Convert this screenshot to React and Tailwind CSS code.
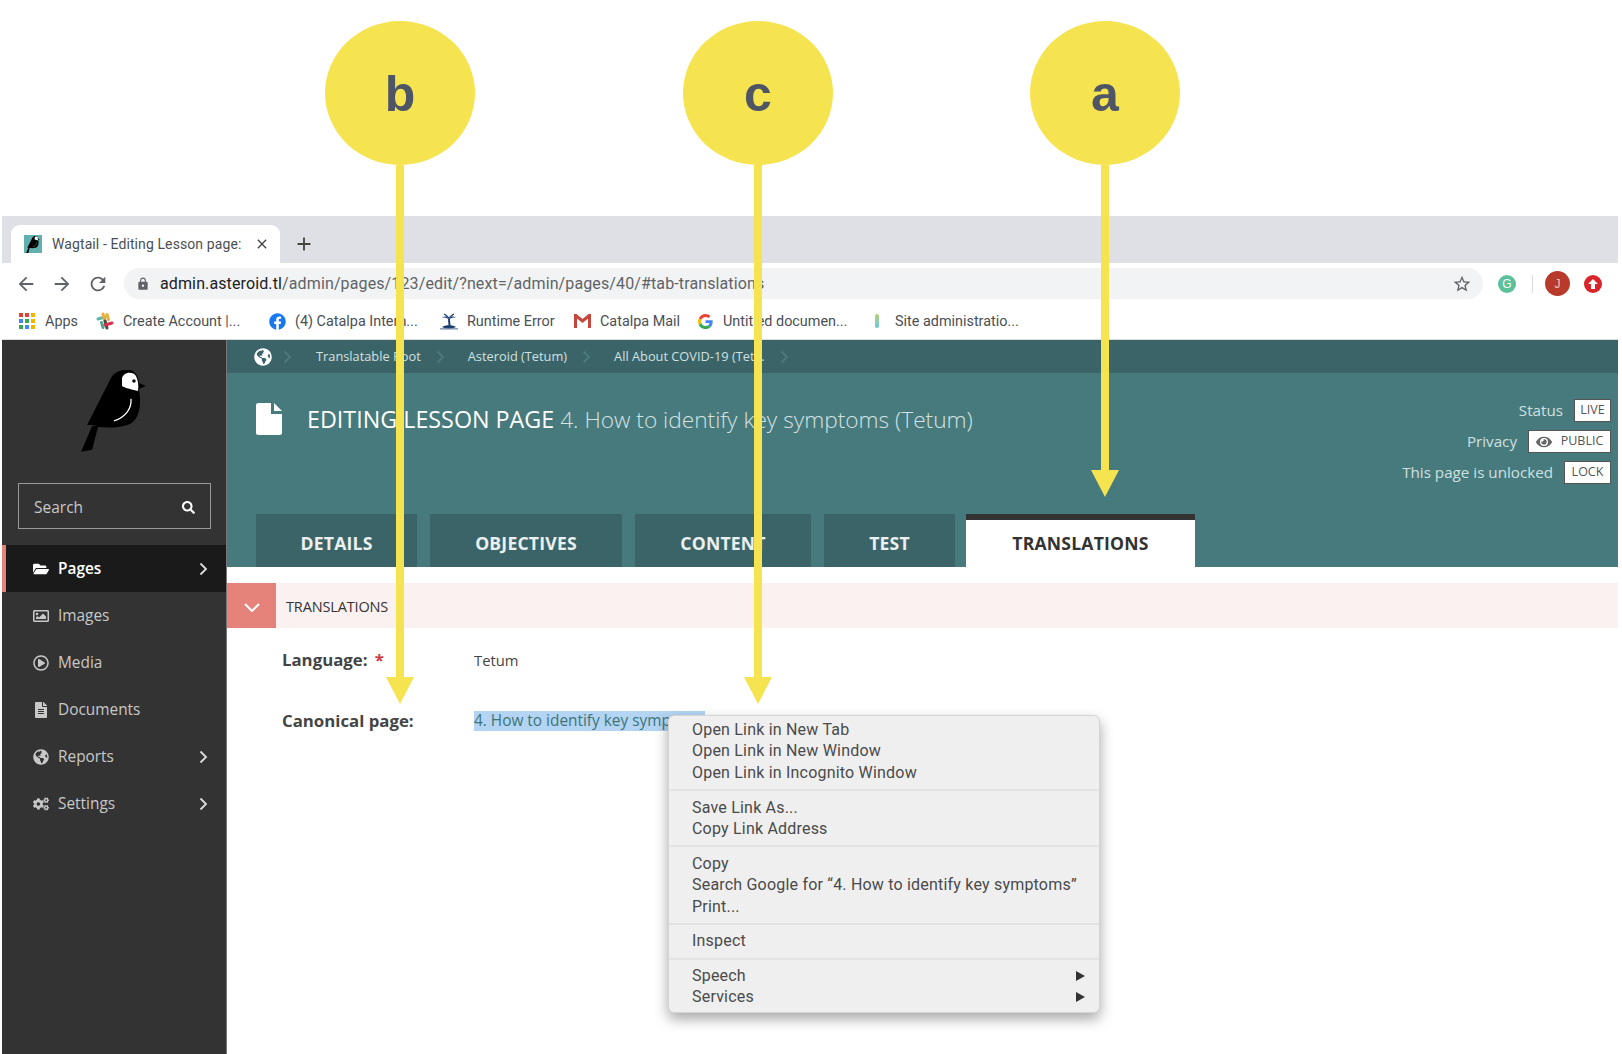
import { FaFolderOpen, FaRegImage, FaRegPlayCircle, FaFileAlt, FaGlobeAmericas, FaCogs, FaSearch, FaEye, FaFacebook } from 'react-icons/fa'
import { MdArrowBack, MdArrowForward, MdRefresh, MdStarBorder, MdLock, MdClose, MdAdd } from 'react-icons/md'

const SANS = "font-['Open_Sans',sans-serif]"
const UI = "font-['Roboto',sans-serif]"

function Marker({ letter, left, bottom }) {
  return (
    <div className="absolute top-[21px] flex flex-col items-center w-[150px]" style={{ left }}>
      <div className="w-[150px] h-[144px] rounded-[50%] bg-[#f5e350] flex items-center justify-center text-[50px] font-bold text-[#4e5666] font-['Liberation_Sans',sans-serif] pt-[2px]">
        {letter}
      </div>
      <div className="w-[8px] bg-[#f5e350]" style={{ height: bottom - 165 - 26 }} />
      <div className="w-0 h-0 border-l-[14px] border-r-[14px] border-t-[27px] border-l-transparent border-r-transparent border-t-[#f5e350]" />
    </div>
  )
}

function Bookmark({ icon, label, className }) {
  return (
    <div className={`flex items-center gap-[9px] ${className}`}>
      <span className="w-[18px] flex justify-center">{icon}</span>
      <span>{label}</span>
    </div>
  )
}

function AppsIcon() {
  const colors = ['#e34133', '#e34133', '#f4b400', '#4285f4', '#34a853', '#f4b400', '#34a853', '#4285f4', '#f4b400']
  return (
    <span className="grid grid-cols-3 gap-[2px] w-[16px]">
      {colors.map((c, i) => (
        <span key={i} className="w-[4px] h-[4px]" style={{ background: c }} />
      ))}
    </span>
  )
}

function GmailIcon() {
  return (
    <svg width="17" height="14" viewBox="0 0 17 14">
      <path d="M0 0h2.5L8.5 5 14.500 0H17v14h-3V4.500L8.500 9 3 4.500V14H0z" fill="#c5463a" />
    </svg>
  )
}

function GoogleIcon() {
  return (
    <svg width="15" height="15" viewBox="0 0 48 48">
      <path fill="#ea4335" d="M24 9.500c3.500 0 6.700 1.200 9.200 3.600l6.800-6.800C35.900 2.400 30.400 0 24 0 14.600 0 6.500 5.400 2.600 13.200l8 6.200C12.400 13.700 17.700 9.500 24 9.500z" />
      <path fill="#4285f4" d="M47 24.500c0-1.600-.1-3.100-.4-4.500H24v9h12.900c-.6 3-2.200 5.500-4.700 7.200l7.700 6C44.400 37.900 47 31.800 47 24.500z" />
      <path fill="#fbbc05" d="M10.500 28.600c-.5-1.400-.8-3-.8-4.600s.3-3.200.8-4.600l-8-6.200C.9 16.500 0 20.100 0 24s.9 7.500 2.600 10.800z" />
      <path fill="#34a853" d="M24 48c6.500 0 11.900-2.100 15.900-5.800l-7.700-6c-2.200 1.400-4.900 2.300-8.200 2.300-6.300 0-11.600-4.200-13.500-9.900l-8 6.200C6.500 42.600 14.600 48 24 48z" />
    </svg>
  )
}

function SlackIcon() {
  return (
    <svg width="18" height="18" viewBox="0 0 18 18" fill="none" strokeWidth="3" strokeLinecap="round">
      <path d="M2 7 L9 5" stroke="#5eb5a8" />
      <path d="M7 2 L9 9" stroke="#e8b13a" />
      <path d="M9 9 L11 16" stroke="#4a4a4a" />
      <path d="M9 13 L16 11" stroke="#d6314f" />
      <path d="M11 2.500 L12.500 7.500" stroke="#e8b13a" />
      <path d="M5.500 10.500 L7 15.500" stroke="#4fa98f" />
    </svg>
  )
}

function PalmIcon() {
  return (
    <svg width="18" height="17" viewBox="0 0 18 17" fill="#1d3f72">
      <path d="M8 6 L10 6 L10.500 13 L8.500 13 Z" />
      <path d="M9 6 C7 3 4 3 2 5 C4 4 6 5 9 6 Z M9 6 C11 3 14 3 16 5 C14 4 12 5 9 6 Z" />
      <path d="M9 5.500 C7.500 2.500 6 1.500 4 1 L9 5.500 Z M9 5.500 C10.500 2.500 12 1.500 14 1 L9 5.500 Z" stroke="#1d3f72" strokeWidth="0.800" />
      <path d="M2 14 C5 11.500 13 11.500 16 14 C14 15.800 4 15.800 2 14 Z" />
      <path d="M0 15.500 H18 V16.300 H0 Z" />
    </svg>
  )
}

function PageIcon() {
  return (
    <svg width="26" height="32" viewBox="0 0 26 32" className="shrink-0">
      <path d="M2 0 H15 V11 H26 V30 C26 31 25 32 24 32 H2 C1 32 0 31 0 30 V2 C0 1 1 0 2 0 Z" fill="#fff" />
      <path d="M18 0 L26 8 H18 Z" fill="#fff" />
    </svg>
  )
}

function Chevron({ className }) {
  return (
    <svg width="9" height="14" viewBox="0 0 9 14" fill="none" stroke="currentColor" strokeWidth="1.800" className={className}>
      <path d="M1.500 1.500 L7 7 L1.500 12.500" />
    </svg>
  )
}

function WagtailBird({ size = 66, className = '' }) {
  return (
    <svg width={size} height={size * 1.24} viewBox="0 0 66 82" className={className}>
      <path d="M0 82 L11 56 L16 55 C8 55 8 55 6 55 L30 8 C34 1 42 -1 50 0 C55 2 58 8 58 13 L65 16 L58 19 C60 30 60 45 52 52 C44 58 30 58 17 57 L11 80 Z" fill="#000" />
      <path d="M41 8 C43 2 52 1 55 6 C57 10 58 15 57 21 C52 20 44 18 41 16 Z" fill="#fff" />
      <circle cx="53" cy="11" r="1.800" fill="#111" />
      <path d="M50 29 C51 38 45 47 33 51" stroke="#fff" strokeWidth="1.300" fill="none" />
    </svg>
  )
}

function NavItem({ icon, label, chevron, active }) {
  return (
    <div className={`flex items-center h-[47px] pl-[26px] pr-[18px] border-l-[4px] ${active ? 'bg-[#1a1a1a] border-[#e5837a] text-white font-semibold' : 'border-transparent text-[#c8c8c8]'}`}>
      <span className="w-[18px] flex justify-center text-[16px]">{icon}</span>
      <span className="ml-[8px] text-[15.400px] flex-1">{label}</span>
      {chevron && <Chevron className="text-[#ddd]" />}
    </div>
  )
}

function Tab({ label, width, active }) {
  return (
    <div className={`h-[53px] flex items-center justify-center text-[17.600px] font-bold tracking-[0.2px] ${active ? 'bg-white text-[#333] border-t-[6px] border-[#333] -ml-[2px]' : 'bg-[#3a6468] text-white/90 pt-[6px]'}`} style={{ width }}>
      {label}
    </div>
  )
}

function Crumb({ label }) {
  return (
    <>
      <span className="text-[12.800px] text-[#d2e0e0]">{label}</span>
      <Chevron className="text-[#4d7a7d] mx-[15px]" />
    </>
  )
}

function StatusRow({ label, badge, width, icon }) {
  return (
    <div className="flex items-center justify-end gap-[11px] h-[31px]">
      <span className="text-[15.200px] text-[#cfe0e0]">{label}</span>
      <span className="h-[23px] bg-white border border-[#555] flex items-center justify-center gap-[9px] text-[12.500px] text-[#555]" style={{ width }}>
        {icon}
        {badge}
      </span>
    </div>
  )
}

const MENU = [
  ['Open Link in New Tab', 'Open Link in New Window', 'Open Link in Incognito Window'],
  ['Save Link As...', 'Copy Link Address'],
  ['Copy', 'Search Google for “4. How to identify key symptoms”', 'Print...'],
  ['Inspect'],
  ['Speech', 'Services'],
]

function ContextMenu() {
  return (
    <div className={`absolute left-[668px] top-[715px] w-[432px] h-[298px] bg-[#efefef] rounded-[6px] shadow-[0_6px_14px_rgba(0,0,0,0.35)] border border-[#d4d4d4] text-[16px] tracking-[0.2px] leading-[21.300px] text-[#4a4a4a] ${UI}`}>
      {MENU.map((group, i) => (
        <div key={i} className={`pl-[23px] pr-[14px] ${i === 0 ? 'pt-[3px] pb-[6.500px]' : 'pt-[5.500px] pb-[6px]'} ${i < MENU.length - 1 ? 'border-b-2 border-[#e3e3e3]' : ''}`}>
          {group.map(item => (
            <div key={item} className="flex items-center justify-between whitespace-nowrap">
              <span>{item}</span>
              {i === 4 && <span className="w-0 h-0 border-l-[9px] border-y-[5px] border-y-transparent border-l-[#333]" />}
            </div>
          ))}
        </div>
      ))}
    </div>
  )
}

export default function App() {
  return (
    <div className="relative w-[1622px] h-[1054px] bg-white overflow-hidden">
      <div className="h-[216px]" />

      <div className="ml-[2px] w-[1616px] h-[838px] flex flex-col">
        {/* tab strip */}
        <div className="h-[47px] bg-[#dfe0e5] flex items-end pl-[9px] shrink-0">
          <div className={`w-[269px] h-[38px] bg-white rounded-t-[9px] flex items-center pl-[13px] pr-[10px] text-[14px] tracking-[0.1px] text-[#4b4f54] ${UI}`}>
            <span className="w-[18px] h-[18px] bg-[#5fb0ae] overflow-hidden flex items-end justify-center shrink-0">
              <WagtailBird size={14} />
            </span>
            <span className="ml-[10px] flex-1 whitespace-nowrap overflow-hidden">Wagtail - Editing Lesson page:</span>
            <MdClose className="text-[16px] text-[#444] ml-[4px] shrink-0" />
          </div>
          <MdAdd className="text-[22px] text-[#444] ml-[13px] mb-[8px]" />
        </div>

        {/* address bar */}
        <div className="h-[36px] pt-[5px] bg-white flex items-center shrink-0">
          <MdArrowBack className="text-[22px] text-[#5f6368] ml-[13px]" />
          <MdArrowForward className="text-[22px] text-[#5f6368] ml-[14px]" />
          <MdRefresh className="text-[22px] text-[#5f6368] ml-[14px]" />
          <div className={`ml-[15px] w-[1359px] h-[31px] rounded-full bg-[#f1f3f4] flex items-center pl-[12px] pr-[11px] text-[16px] tracking-[0.12px] ${UI}`}>
            <MdLock className="text-[14px] text-[#5f6368]" />
            <span className="ml-[10px] text-[#202124]">admin.asteroid.tl</span>
            <span className="text-[#5f6368] flex-1">/admin/pages/123/edit/?next=/admin/pages/40/#tab-translations</span>
            <MdStarBorder className="text-[20px] text-[#5f6368]" />
          </div>
          <span className="ml-[15px] w-[18px] h-[18px] rounded-full bg-[#5cc09a] text-white flex items-center justify-center text-[12px] font-['Liberation_Sans',sans-serif]">G</span>
          <span className="ml-[16px] w-px h-[18px] bg-[#dadce0]" />
          <span className="ml-[12px] w-[25px] h-[25px] rounded-full bg-[#b83a2b] text-[#f0c8c0] flex items-center justify-center text-[12px] font-['Liberation_Sans',sans-serif]">J</span>
          <span className="ml-[14px] w-[18px] h-[18px] rounded-full bg-[#d9252a] flex items-center justify-center">
            <svg width="10" height="10" viewBox="0 0 10 10"><path d="M5 0 L10 5 H7 V10 H3 V5 H0 Z" fill="#fff" /></svg>
          </span>
        </div>

        {/* bookmarks */}
        <div className={`h-[41px] pt-[5px] bg-white flex items-center pl-[16px] text-[14.400px] text-[#4b4f54] border-b border-[#d8dce0] shrink-0 ${UI}`}>
          <Bookmark icon={<AppsIcon />} label="Apps" className="w-[78px]" />
          <Bookmark icon={<SlackIcon />} label="Create Account |..." className="w-[172px]" />
          <Bookmark icon={<FaFacebook className="text-[17px] text-[#1877f2]" />} label="(4) Catalpa Intern..." className="w-[172px]" />
          <Bookmark icon={<PalmIcon />} label="Runtime Error" className="w-[133px]" />
          <Bookmark icon={<GmailIcon />} label="Catalpa Mail" className="w-[123px]" />
          <Bookmark icon={<GoogleIcon />} label="Untitled documen..." className="w-[172px]" />
          <Bookmark icon={<span className="block w-[4px] h-[14px] rounded-full bg-gradient-to-b from-[#b5d36a] to-[#6cc4de]" />} label="Site administratio..." />
        </div>

        {/* wagtail */}
        <div className={`flex-1 flex min-h-0 ${SANS}`}>
          <aside className="w-[225px] bg-[#333] shrink-0 border-r border-[#777]">
            <div className="h-[143px] flex justify-center pt-[30px]">
              <WagtailBird size={66} />
            </div>
            <div className="ml-[16px] mr-[15px] h-[46px] border border-[#999] flex items-center justify-between pl-[15px] pr-[15px] pt-[3px] text-[15.500px] text-[#c8c8c8]">
              <span>Search</span>
              <FaSearch className="text-[13px] text-white" />
            </div>
            <div className="mt-[16px]">
              <NavItem icon={<FaFolderOpen />} label="Pages" chevron active />
              <NavItem icon={<FaRegImage />} label="Images" />
              <NavItem icon={<FaRegPlayCircle />} label="Media" />
              <NavItem icon={<FaFileAlt />} label="Documents" />
              <NavItem icon={<FaGlobeAmericas />} label="Reports" chevron />
              <NavItem icon={<FaCogs />} label="Settings" chevron />
            </div>
          </aside>

          <main className="flex-1 min-w-0">
            <div className="h-[33px] bg-[#3a6468] flex items-center pl-[27px]">
              <FaGlobeAmericas className="text-[18px] text-white mr-[11px]" />
              <Chevron className="text-[#4d7a7d] mr-[24px]" />
              <Crumb label="Translatable Root" />
              <span className="w-[8px]" />
              <Crumb label="Asteroid (Tetum)" />
              <span className="w-[8px]" />
              <Crumb label="All About COVID-19 (Tet..." />
            </div>

            <div className="h-[194px] bg-[#477a7d] flex flex-col justify-between">
              <div className="flex justify-between pt-[22px] pr-[7px]">
                <div className="flex items-start pl-[29px] pt-[8px]">
                  <PageIcon />
                  <h1 className="ml-[25px] text-[22.700px] leading-[32px] font-light text-[#d5e2e2] whitespace-nowrap">
                    <span className="font-medium text-white text-[23.300px]">EDITING LESSON PAGE</span> 4. How to identify key symptoms (Tetum)
                  </h1>
                </div>
                <div>
                  <StatusRow label="Status" badge="LIVE" width={37} />
                  <StatusRow label="Privacy" badge="PUBLIC" width={83} icon={<FaEye className="text-[16px] text-[#666]" />} />
                  <StatusRow label="This page is unlocked" badge="LOCK" width={47} />
                </div>
              </div>
              <div className="flex gap-[13px] pl-[29px]">
                <Tab label="DETAILS" width={161} />
                <Tab label="OBJECTIVES" width={192} />
                <Tab label="CONTENT" width={176} />
                <Tab label="TEST" width={131} />
                <Tab label="TRANSLATIONS" width={229} active />
              </div>
            </div>

            <div className="mt-[16px] h-[45px] bg-[#fbf1f1] flex items-center">
              <div className="w-[49px] h-[45px] bg-[#e5837a] flex items-center justify-center pt-[4px]">
                <svg width="16" height="9" viewBox="0 0 16 9" fill="none" stroke="#fff" strokeWidth="2"><path d="M1 1 L8 8 L15 1" /></svg>
              </div>
              <span className="ml-[10px] pt-[2px] text-[14.500px] tracking-[-0.15px] text-[#333]">TRANSLATIONS</span>
            </div>

            <div className="pl-[55px] pt-[20px] text-[14.800px] text-[#444]">
              <div className="flex items-center h-[24px]">
                <span className="w-[192px] text-[16.800px] font-bold">
                  Language: <span className="text-[#cd3a40] ml-[3px]">*</span>
                </span>
                <span>Tetum</span>
              </div>
              <div className="flex items-center h-[24px] mt-[37px]">
                <span className="w-[192px] text-[16.800px] font-bold">Canonical page:</span>
                <span className="bg-[#b3d4f3] text-[#3e7478] text-[15.400px] w-[231px] h-[20px] leading-[20px] whitespace-nowrap">4. How to identify key symptoms</span>
              </div>
            </div>
          </main>
        </div>
      </div>

      <ContextMenu />

      <Marker letter="b" left={325} bottom={703} />
      <Marker letter="c" left={683} bottom={703} />
      <Marker letter="a" left={1030} bottom={496} />
    </div>
  )
}
